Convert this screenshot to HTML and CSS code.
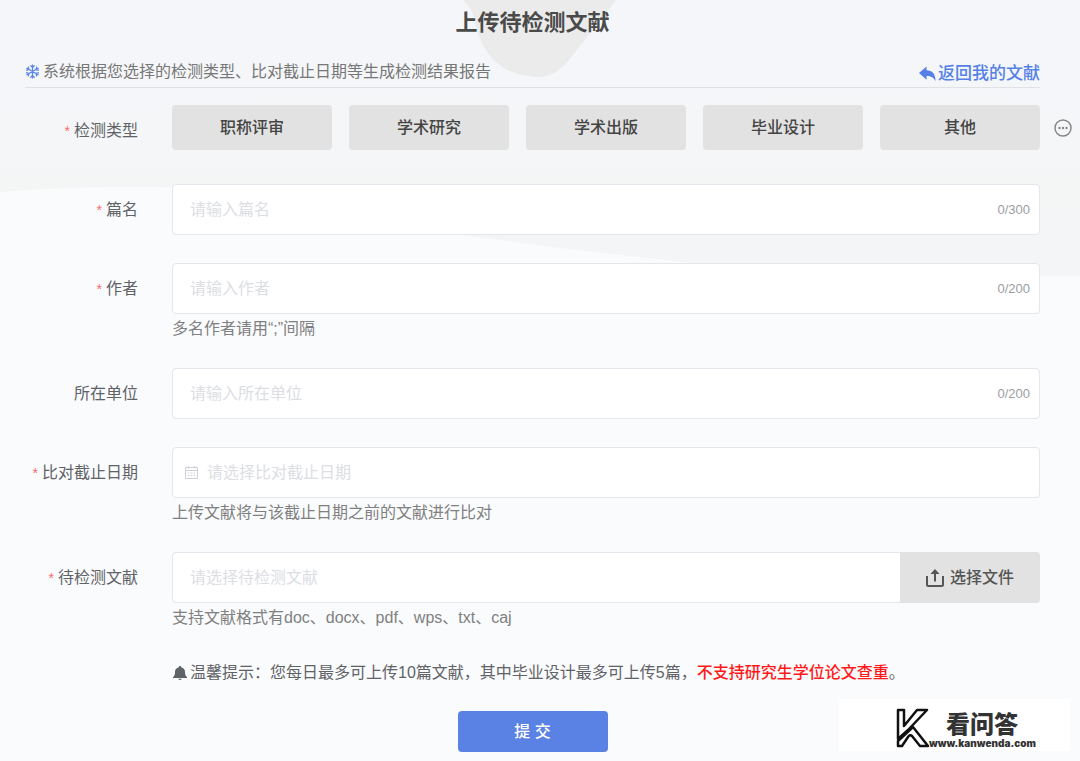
FILE: index.html
```html
<!DOCTYPE html>
<html lang="zh-CN">
<head>
<meta charset="utf-8">
<meta name="viewport" content="width=device-width, initial-scale=1">
<title>上传待检测文献</title>
<link rel="stylesheet" href="styles.css">
</head>
<body>
<svg class="backdrop" viewBox="0 0 1080 761" preserveAspectRatio="none" aria-hidden="true">
  <defs>
    <linearGradient id="wave" x1="0" y1="0" x2="0" y2="1">
      <stop offset="0" stop-color="#f4f6f9"/>
      <stop offset=".55" stop-color="#f5f6f8"/>
      <stop offset=".7" stop-color="#f4f6f5"/>
      <stop offset=".82" stop-color="#f4f5f7"/>
      <stop offset="1" stop-color="#f4f5f7"/>
    </linearGradient>
  </defs>
  <path fill="url(#wave)" d="M0 0H1080V276H860Q740 270 640 257Q560 249 455 234Q320 190 160 187Q80 186 0 192Z"/>
  <path fill="#ebebeb" d="M463 0H616L569 60Q555 77 538 77Q500 76 484 47Q477 34 474 17Q470 6 463 0Z"/>
</svg>
<main class="page">
  <h1 class="title">上传待检测文献</h1>
  <header class="intro">
    <p class="intro-text">
      <svg class="icon-snow" viewBox="0 0 14 14" aria-hidden="true"><path d="M7 .5v13M1.300 3.700l11.400 6.600M1.300 10.300l11.400-6.600M5 1.300l2 2 2-2M5 12.700l2-2 2 2M1 6l2.700-.8L3 2.500M13 6l-2.700-.8L11 2.500M1 8l2.700.8L3 11.500M13 8l-2.700.8L11 11.500"/></svg>
      系统根据您选择的检测类型、比对截止日期等生成检测结果报告
    </p>
    <a class="back-link" href="#">
      <svg class="icon-back" viewBox="0 0 18 16" aria-hidden="true"><path d="M0 7L8 0v4c6 0 9.500 4 9.500 11.500C15.500 11.500 13 10 8 10v4z"/></svg>返回我的文献
    </a>
  </header>
  <form class="form">
    <div class="row row-types">
      <span class="label required" id="type-label">检测类型</span>
      <div class="types" role="group" aria-labelledby="type-label">
        <button class="type" type="button">职称评审</button>
        <button class="type" type="button">学术研究</button>
        <button class="type" type="button">学术出版</button>
        <button class="type" type="button">毕业设计</button>
        <button class="type" type="button">其他</button>
      </div>
      <button class="more" type="button" aria-label="更多">
        <svg class="icon-more" viewBox="0 0 18 18" aria-hidden="true"><circle class="ring" cx="9" cy="9" r="8"/><circle cx="5.500" cy="9" r="1.200"/><circle cx="9" cy="9" r="1.200"/><circle cx="12.500" cy="9" r="1.200"/></svg>
      </button>
    </div>
    <div class="row">
      <label class="label required" for="paper">篇名</label>
      <div class="field"><input class="input" id="paper" type="text" maxlength="300" placeholder="请输入篇名"><span class="count">0/300</span></div>
    </div>
    <div class="row">
      <label class="label required" for="author">作者</label>
      <div>
        <div class="field"><input class="input" id="author" type="text" maxlength="200" placeholder="请输入作者"><span class="count">0/200</span></div>
        <p class="hint">多名作者请用“;”间隔</p>
      </div>
    </div>
    <div class="row">
      <label class="label" for="unit">所在单位</label>
      <div class="field"><input class="input" id="unit" type="text" maxlength="200" placeholder="请输入所在单位"><span class="count">0/200</span></div>
    </div>
    <div class="row">
      <label class="label required" for="deadline">比对截止日期</label>
      <div>
        <div class="field field-date">
          <svg class="icon-date" viewBox="0 0 13 13" aria-hidden="true"><path d="M.5 1.500h12v11H.5zM.5 4.500h12M3.500 0v2.500M9.500 0v2.500M3 7h1.500M5.800 7h1.500M8.600 7h1.500M3 9.500h1.500M5.800 9.500h1.500M8.600 9.500h1.500"/></svg>
          <input class="input" id="deadline" type="text" placeholder="请选择比对截止日期">
        </div>
        <p class="hint">上传文献将与该截止日期之前的文献进行比对</p>
      </div>
    </div>
    <div class="row">
      <label class="label required" for="file">待检测文献</label>
      <div>
        <div class="field field-file">
          <input class="input" id="file" type="text" placeholder="请选择待检测文献">
          <button class="choose" type="button">
            <svg class="icon-upload" viewBox="0 0 18 18" aria-hidden="true"><path d="M1 7v8.500q0 1.500 1.500 1.500h13q1.500 0 1.500-1.500V7M9 12.500V2"/><path class="head" d="M9 0l4.500 5h-9z"/></svg>选择文件
          </button>
        </div>
        <p class="hint">支持文献格式有doc、docx、pdf、wps、txt、caj</p>
      </div>
    </div>
    <p class="tip">
      <svg class="icon-bell" viewBox="0 0 14 14" aria-hidden="true"><path d="M7 0c.8 0 1.200.5 1.200 1.200C10.700 1.800 12 3.500 12 6c0 2.500.5 4 2 5v1H0v-1c1.500-1 2-2.500 2-5 0-2.500 1.300-4.200 3.800-4.800C5.800.5 6.200 0 7 0zM5.200 12.700h3.600Q8.300 14 7 14t-1.800-1.300z"/></svg>
      <span>温馨提示：您每日最多可上传10篇文献，其中毕业设计最多可上传5篇，<strong class="warn">不支持研究生学位论文查重</strong>。</span>
    </p>
    <button class="submit" type="submit">提 交</button>
  </form>
</main>
<aside class="watermark">
  <svg class="mark" viewBox="0 0 34 40" aria-hidden="true"><path d="M2 2h6v16L21 2h10L12 22 2 31zM2 38v-5l15-14 15 19h-8l-8-10q-2-2-4 1l-6 9z"/></svg>
  <div class="brand"><span class="brand-name">看问答</span><span class="brand-url">www.kanwenda.com</span></div>
</aside>
</body>
</html>
```
FILE: styles.css
```css
* {
  box-sizing: border-box;
}

body {
  position: relative;
  margin: 0;
  background: #fafbfd;
  color: #606266;
  font: 16px/24px "Liberation Sans", "Noto Sans CJK SC", sans-serif;
}

button,
input {
  margin: 0;
  padding: 0;
  border: 0;
  background: none;
  color: inherit;
  font: inherit;
}

button {
  cursor: pointer;
}

p {
  margin: 0;
}

.backdrop {
  position: absolute;
  top: 0;
  left: 0;
  width: 100%;
  height: 100%;
}

.page {
  position: relative;
  padding: 0 0 9px 25px;
}

.title {
  margin: 0 40px 10px 0;
  color: #4a4a4a;
  font-size: 22px;
  font-weight: 600;
  line-height: 46px;
  text-align: center;
}

.intro {
  display: flex;
  justify-content: space-between;
  align-items: center;
  height: 32px;
  margin: 0 40px 17px 0;
  border-bottom: 1px solid #dfe1e3;
}

.intro-text {
  display: flex;
  align-items: center;
  gap: 3px;
  color: #777;
}

.icon-snow {
  width: 15px;
  height: 15px;
  fill: none;
  stroke: #5b85e6;
  stroke-width: 1.200;
}

.back-link {
  display: flex;
  align-items: center;
  gap: 2px;
  padding-top: 4px;
  color: #5581e6;
  font-size: 17px;
  font-weight: 500;
  text-decoration: none;
}

.icon-back {
  width: 17px;
  height: 16px;
  fill: currentColor;
}

.form {
  display: flex;
  flex-direction: column;
  gap: 28px;
}

.row {
  display: grid;
  grid-template-columns: 113px minmax(0, 1fr);
  column-gap: 34px;
  padding-right: 40px;
}

.row-types {
  grid-template-columns: 113px minmax(0, 1fr) 32px;
  padding-right: 8px;
  column-gap: 0;
}

.label {
  height: 51px;
  color: #606266;
  line-height: 51px;
  text-align: right;
  white-space: nowrap;
}

.required::before {
  content: "*";
  margin-right: 4px;
  color: #f56c6c;
  font-size: 14px;
  line-height: 1;
}

.types {
  display: flex;
  gap: 17px;
  margin-left: 34px;
}

.type {
  flex: 1;
  height: 45px;
  border-radius: 4px;
  background: #e2e2e2;
  color: #444;
  font-weight: 500;
}

.more {
  display: flex;
  justify-content: flex-end;
  align-items: center;
  height: 45px;
}

.icon-more {
  width: 18px;
  height: 18px;
  fill: #888;
}

.ring {
  fill: none;
  stroke: #888;
  stroke-width: 1.500;
}

.field {
  display: flex;
  align-items: center;
  height: 51px;
  padding: 0 9px 0 17px;
  border: 1px solid #e4e6ec;
  border-radius: 4px;
  background: #fff;
}

.input {
  flex: 1;
  min-width: 0;
  height: 100%;
  outline: 0;
}

.input::placeholder {
  color: #dcdee4;
  opacity: 1;
}

.count {
  color: #9b9da2;
  font-size: 13px;
}

.field-date {
  gap: 9px;
  padding-left: 12px;
}

.icon-date {
  width: 13px;
  height: 13px;
  fill: none;
  stroke: #cdd0d8;
}

.field-file {
  padding-right: 0;
}

.choose {
  display: flex;
  justify-content: center;
  align-items: center;
  gap: 6px;
  width: 140px;
  height: 51px;
  margin-right: -1px;
  border-radius: 0 4px 4px 0;
  background: #e2e2e2;
  color: #555;
  font-weight: 500;
}

.icon-upload {
  width: 18px;
  height: 18px;
  fill: none;
  stroke: #555;
  stroke-width: 2;
}

.head {
  fill: #555;
  stroke: none;
}

.hint {
  padding-top: 4px;
  color: #808080;
  line-height: 22px;
}

.tip {
  display: flex;
  align-items: center;
  gap: 3px;
  margin: 0 40px 0 148px;
  line-height: 32px;
}

.icon-bell {
  flex: none;
  width: 14px;
  height: 14px;
  fill: #606266;
}

.warn {
  color: #ff1a1a;
  font-weight: 500;
}

.submit {
  align-self: center;
  width: 150px;
  height: 41px;
  margin: -6px 40px 0 0;
  border-radius: 4px;
  background: #5982e4;
  color: #fff;
  font-weight: 500;
}

.watermark {
  position: absolute;
  right: 10px;
  bottom: 10px;
  display: flex;
  align-items: flex-end;
  width: 231px;
  height: 52px;
  padding: 0 0 2px 57px;
  background: #fff;
}

.mark {
  flex: none;
  width: 34px;
  height: 42px;
  fill: #fff;
  stroke: #111;
  stroke-width: 2.500;
  stroke-linejoin: round;
}

.brand {
  display: flex;
  flex-direction: column;
  margin-left: -1px;
  color: #333;
  font-weight: 900;
}

.brand-name {
  padding-left: 17px;
  font-size: 24px;
  line-height: 24px;
}

.brand-url {
  font-family: Inter, "Liberation Sans", sans-serif;
  font-size: 10px;
  line-height: 12px;
}
```
